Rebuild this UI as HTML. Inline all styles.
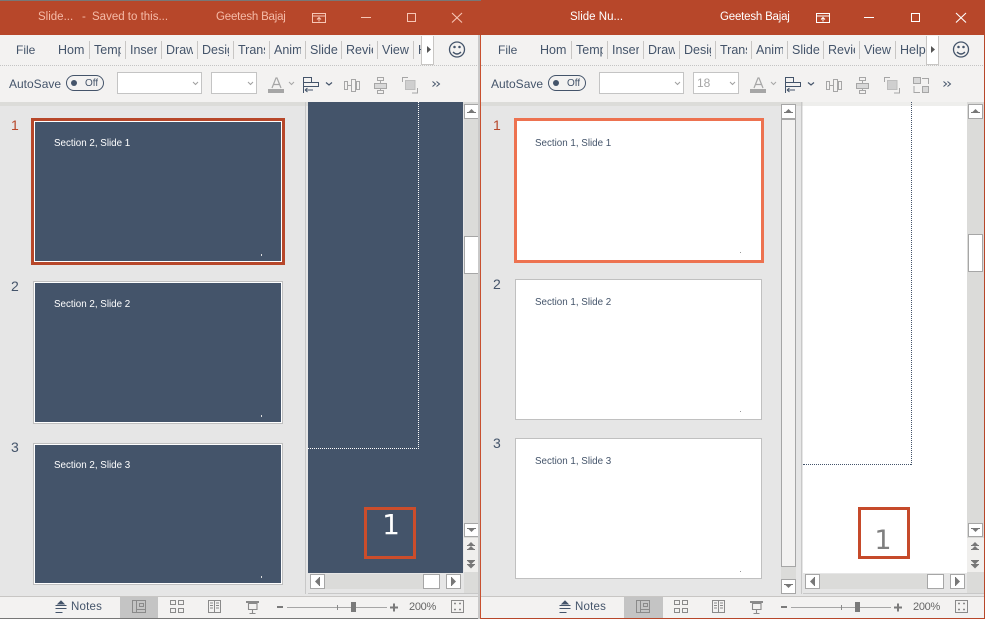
<!DOCTYPE html>
<html><head><meta charset="utf-8"><style>
html,body{margin:0;padding:0;background:#e6e6e6}
#p{position:relative;width:985px;height:619px;overflow:hidden;font-family:"Liberation Sans",sans-serif;color:#44546a;font-size:12px}
#p div{position:absolute;box-sizing:border-box}
.t{white-space:nowrap;overflow:hidden}
.sb{background:#fff;border:1px solid #a6a6a6}
.th{background:#44546a;border:1px solid #fff;outline:1px solid #c0c0c0}
.w{background:#fff;border:1px solid #c0c0c0}
.lab{font-size:9.800px;white-space:nowrap}
.tab{top:43px;font-size:12.500px}
.sep{top:41px;width:1px;height:18px;background:#c8c6c4}
.big{width:52px;text-align:center;font-size:28px;line-height:36px;font-family:"DejaVu Sans",sans-serif}
svg{position:absolute;left:0;top:0;overflow:visible}
</style></head><body><div id="p">
<svg width="0" height="0"><defs>
<g id="arrowU"><path d="M4 8.500L7.500 5L11 8.500Z" fill="#777"/><rect x="3" y="8" width="9" height="1" fill="#777"/></g>
<g id="arrowD"><path d="M4 5.500L7.500 9L11 5.500Z" fill="#777"/><rect x="3" y="5" width="9" height="1" fill="#777"/></g>
<g id="arrowL"><path d="M9 3.500L5 7.500L9 11.500Z" fill="#777"/><rect x="9" y="3" width="1" height="9" fill="#777"/></g>
<g id="arrowR"><path d="M6 3.500L10 7.500L6 11.500Z" fill="#777"/><rect x="5" y="3" width="1" height="9" fill="#777"/></g>
<g id="dbl" fill="#777"><path d="M471 542L467.500 545.500H474.500Z"/><rect x="467" y="545" width="8" height="1"/><path d="M471 546L467.500 549.500H474.500Z"/><rect x="467" y="549" width="8" height="1"/>
<rect x="467" y="560" width="8" height="1"/><path d="M467.500 561L471 564.500L474.500 561Z"/><rect x="467" y="564" width="8" height="1"/><path d="M467.500 565L471 568.500L474.500 565Z"/></g>
<g id="tools" fill="none">
<path d="M272 88L276 78H277L281 88M273.500 84.500H279.500" stroke="#a6a6a6" stroke-width="1.200"/><rect x="268" y="89" width="16" height="4" fill="#a6a6a6"/>
<path d="M289 82L291.500 84.500L294 82" stroke="#a6a6a6"/>
<path d="M303.500 77V93" stroke="#44546a"/><path d="M304 77.500H311.500V82.500H304M304 82.500H318.500V86.500H304" stroke="#44546a"/><path d="M305 90H313M305 90L307.500 88M305 90L307.500 92" stroke="#44546a"/>
<path d="M326 82.500L329 85L332 82.500" stroke="#44546a" stroke-width="1.200"/>
<g stroke="#a6a6a6"><rect x="344.500" y="81.500" width="3" height="8"/><rect x="351.500" y="79.500" width="4" height="12"/><rect x="356.500" y="81.500" width="3" height="8"/><path d="M347.500 85.500H351.500M355.500 85.500H356.500"/>
<rect x="377.500" y="77.500" width="6" height="3"/><rect x="374.500" y="83.500" width="12" height="5" fill="#d8d8d8"/><rect x="377.500" y="90.500" width="6" height="3"/><path d="M380.500 80.500V83.500M380.500 88.500V90.500"/>
<path d="M402.500 82V77.500H408M417.500 88V93H412"/></g><rect x="405.500" y="80.500" width="9.500" height="9" fill="#cfcfcf" stroke="#bdbdbd"/>
</g>
<path id="chev" d="M432.500 81.500L435.500 84L432.500 86.500M436.500 81.500L439.500 84L436.500 86.500" stroke="#44546a" fill="none"/>
<g id="smile" fill="none" stroke="#44546a" stroke-width="1.300"><circle cx="457" cy="49.500" r="7.500"/><path d="M453 52Q457 56 461 52"/><circle cx="454.500" cy="47" r=".6"/><circle cx="459.500" cy="47" r=".6"/></g>
<g id="status" fill="none" stroke="#8a8a8a">
<rect x="132.500" y="600.500" width="13" height="12"/><path d="M136.500 601V612M136.500 609.500H145"/><rect x="139.500" y="603.500" width="4" height="3"/>
<rect x="170.500" y="600.500" width="5" height="4"/><rect x="178.500" y="600.500" width="5" height="4"/><rect x="170.500" y="608.500" width="5" height="4"/><rect x="178.500" y="608.500" width="5" height="4"/>
<path d="M208.500 600.500H214.500V612.500H208.500ZM214.500 600.500H220.500V612.500H214.500ZM210 603H213M210 605.500H213M210 608H213M216 603H219M216 605.500H219M216 608H219"/>
<path d="M248.500 603.500H257V609.500H248.500ZM252.500 609.500V613.500M249.500 613.500H255.500" stroke-width="1.100"/><rect x="246" y="601" width="13" height="2" fill="#8a8a8a" stroke="none"/>
<path d="M287 607.500H387" stroke="#a6a6a6"/><path d="M337.500 605V610"/>
<rect x="451.500" y="600.500" width="12" height="12"/><path d="M454 603.500H456M455 602.500V604.500M459 603.500H461M460 602.500V604.500M454 609.500H456M455 608.500V610.500M459 609.500H461M460 608.500V610.500" stroke-width="1"/>
</g>
<g id="statusB"><rect x="351" y="602" width="5" height="10" fill="#7a7a7a"/><rect x="277" y="606" width="6" height="2" fill="#7a7a7a"/><path d="M390 607.500H398M394 603.500V611.500" stroke="#7a7a7a" stroke-width="2"/></g>
<g id="notes" fill="none" stroke="#44546a"><path d="M55.500 605.500H66.500M55.500 608.500H66.500M55.500 612.500H62.500"/><path d="M58 604L61 601L64 604Z" fill="#44546a"/></g>
</defs></svg>

<!-- LEFT WINDOW -->
<div style="left:0;top:0;width:481px;height:619px;background:#e6e6e6;overflow:hidden">
<div style="left:0;top:0;width:481px;height:1px;background:#777"></div>
<div style="left:0;top:1px;width:481px;height:34px;background:#b7472a"></div>
<div class="t" style="left:38px;top:11px;color:#f5bba8;font-size:11.500px">Slide...</div>
<div class="t" style="left:82px;top:11px;color:#f5bba8;font-size:11.500px">-</div>
<div class="t" style="left:92px;top:11px;color:#f5bba8;font-size:11.500px">Saved to this...</div>
<div class="t" style="left:216px;top:11px;width:70px;color:#f5bba8;font-size:11.500px;letter-spacing:-.2px">Geetesh Bajaj</div>
<div style="left:0;top:35px;width:481px;height:31px;background:#f3f2f1;border-bottom:1px dotted #c4c4c4"></div>
<div style="left:0;top:66px;width:481px;height:36px;background:#f3f2f1"></div>
<div style="left:0;top:102px;width:481px;height:4px;background:#dcdcd9"></div>
<div class="t tab" style="left:16px;font-size:12px">File</div>
<div class="t tab" style="left:58px;width:28px">Hom</div><div class="sep" style="left:89px"></div>
<div class="t tab" style="left:94px;width:27px">Templates</div><div class="sep" style="left:125px"></div>
<div class="t tab" style="left:130px;width:27px">Insert</div><div class="sep" style="left:161px"></div>
<div class="t tab" style="left:166px;width:27px">Draw</div><div class="sep" style="left:197px"></div>
<div class="t tab" style="left:202px;width:27px">Design</div><div class="sep" style="left:233px"></div>
<div class="t tab" style="left:238px;width:27px">Transitions</div><div class="sep" style="left:269px"></div>
<div class="t tab" style="left:274px;width:27px">Animations</div><div class="sep" style="left:305px"></div>
<div class="t tab" style="left:310px;width:28px">Slide</div><div class="sep" style="left:341px"></div>
<div class="t tab" style="left:346px;width:27px">Review</div><div class="sep" style="left:377px"></div>
<div class="t tab" style="left:382px;width:28px">View</div><div class="sep" style="left:413px"></div>
<div class="t tab" style="left:418px;width:4px">Help</div>
<div style="left:421px;top:36px;width:13px;height:29px;background:#fff;border:1px solid #c8c6c4;border-top:0"></div>
<div style="left:9px;top:77px;font-size:12px" class="t">AutoSave</div>
<div style="left:66px;top:75px;width:38px;height:16px;border:1px solid #44546a;border-radius:8px"></div>
<div style="left:71px;top:80px;width:6px;height:6px;background:#44546a;border-radius:50%"></div>
<div class="t" style="left:85px;top:78px;font-size:10px;">Off</div>
<div style="left:117px;top:72px;width:85px;height:22px;background:#fff;border:1px solid #c4c4c4"></div>
<div style="left:211px;top:72px;width:46px;height:22px;background:#fff;border:1px solid #c4c4c4"></div>
<svg width="481" height="619">
<path d="M193 82L195.500 84.500L198 82M248 82L250.500 84.500L253 82" fill="none" stroke="#a0a0a0"/>
<path d="M427 46L431 49.500L427 53Z" fill="#555"/>
<use href="#tools"/><use href="#chev"/><use href="#smile"/>
<path d="M312.500 13.500H325.500V22.500H312.500ZM312.500 16H325.500M319 21.500V17.500M317 19.500L319 17.500L321 19.500" fill="none" stroke="#f7c6b5"/>
<path d="M361 17.500H371" stroke="#f7c6b5"/><rect x="407.500" y="13.500" width="8" height="8" fill="none" stroke="#f7c6b5"/>
<path d="M452 13L462 22.500M462 13L452 22.500" stroke="#f7c6b5" stroke-width="1.100"/>
</svg>

<div style="left:305px;top:102px;width:1px;height:492px;background:#c8c8c8"></div>
<div style="left:308px;top:102px;width:155px;height:471px;background:#44546a"></div>
<div style="left:418px;top:102px;width:1px;height:347px;border-left:1px dotted #fff"></div>
<div style="left:308px;top:448px;width:111px;height:1px;border-top:1px dotted #fff"></div>
<div style="left:364px;top:507px;width:52px;height:52px;border:3px solid #cc4d2b"></div>
<div class="big" style="left:365px;top:507px;color:#fff">1</div>

<div style="left:31px;top:118px;width:254px;height:147px;background:#b7472a"></div>
<div style="left:34px;top:121px;width:248px;height:141px;background:#44546a;border:1px solid #fff"></div>
<div class="lab" style="left:54px;top:138px;color:#fff">Section 2, Slide 1</div>
<div style="left:261px;top:254px;width:1px;height:2px;background:#ddd"></div>
<div class="th" style="left:34px;top:282px;width:248px;height:141px"></div>
<div class="lab" style="left:54px;top:299px;color:#fff">Section 2, Slide 2</div>
<div style="left:261px;top:415px;width:1px;height:2px;background:#ddd"></div>
<div class="th" style="left:34px;top:444px;width:248px;height:140px"></div>
<div class="lab" style="left:54px;top:460px;color:#fff">Section 2, Slide 3</div>
<div style="left:261px;top:576px;width:1px;height:2px;background:#ddd"></div>
<div style="left:11px;top:117px;font-size:14px;color:#b7472a">1</div>
<div style="left:11px;top:278px;font-size:14px">2</div>
<div style="left:11px;top:439px;font-size:14px">3</div>

<div style="left:464px;top:102px;width:15px;height:491px;background:#dbdbd9"></div>
<div class="sb" style="left:464px;top:104px;width:15px;height:15px"></div>
<div class="sb" style="left:464px;top:236px;width:15px;height:38px"></div>
<div class="sb" style="left:464px;top:523px;width:15px;height:14px"></div>
<div style="left:464px;top:538px;width:15px;height:34px;background:#f0efed"></div>
<div style="left:325px;top:574px;width:98px;height:15px;background:#dbdbd9"></div>
<div class="sb" style="left:310px;top:574px;width:15px;height:15px"></div>
<div class="sb" style="left:423px;top:574px;width:17px;height:15px"></div>
<div class="sb" style="left:446px;top:574px;width:15px;height:15px"></div>
<svg width="481" height="619"><use href="#arrowU" x="464" y="104"/><use href="#arrowD" x="464" y="523"/><use href="#dbl"/><use href="#arrowL" x="310" y="574"/><use href="#arrowR" x="446" y="574"/></svg>
<div style="left:308px;top:593px;width:172px;height:1px;background:#c8c8c8"></div>

<div style="left:0;top:596px;width:481px;height:23px;background:#f3f2f1;border-top:1px solid #c8c6c4;border-bottom:1px solid #777"></div>
<div style="left:120px;top:597px;width:38px;height:21px;background:#c4c4c4"></div>
<div class="t" style="left:71px;top:601px;font-size:11.500px;letter-spacing:.2px">Notes</div>
<div class="t" style="left:409px;top:601px;font-size:11px;letter-spacing:-.3px;color:#666">200%</div>
<svg width="481" height="619"><use href="#notes"/><use href="#status"/><use href="#statusB"/></svg>
<div style="left:478px;top:35px;width:2px;height:584px;background:#c9c9c9"></div>
<div style="left:480px;top:35px;width:1px;height:584px;background:#c8502f"></div>
</div>

<!-- RIGHT WINDOW -->
<div style="left:481px;top:0;width:504px;height:619px;background:#e6e6e6;overflow:hidden">
<div style="left:0;top:0;width:504px;height:35px;background:#b7472a"></div>
<div class="t" style="left:89px;top:11px;color:#fff;font-size:11.500px">Slide Nu...</div>
<div class="t" style="left:239px;top:11px;width:70px;color:#fff;font-size:11.500px;letter-spacing:-.2px">Geetesh Bajaj</div>
<div style="left:0;top:35px;width:504px;height:31px;background:#f3f2f1;border-bottom:1px dotted #c4c4c4"></div>
<div style="left:0;top:66px;width:504px;height:36px;background:#f3f2f1"></div>
<div style="left:0;top:102px;width:504px;height:4px;background:#dcdcd9"></div>
<div class="t tab" style="left:17px;font-size:12px">File</div>
<div class="t tab" style="left:59px;width:28px">Hom</div><div class="sep" style="left:90px"></div>
<div class="t tab" style="left:95px;width:27px">Templates</div><div class="sep" style="left:126px"></div>
<div class="t tab" style="left:131px;width:27px">Insert</div><div class="sep" style="left:162px"></div>
<div class="t tab" style="left:167px;width:27px">Draw</div><div class="sep" style="left:198px"></div>
<div class="t tab" style="left:203px;width:27px">Design</div><div class="sep" style="left:234px"></div>
<div class="t tab" style="left:239px;width:27px">Transitions</div><div class="sep" style="left:270px"></div>
<div class="t tab" style="left:275px;width:27px">Animations</div><div class="sep" style="left:306px"></div>
<div class="t tab" style="left:311px;width:28px">Slide</div><div class="sep" style="left:342px"></div>
<div class="t tab" style="left:347px;width:27px">Review</div><div class="sep" style="left:378px"></div>
<div class="t tab" style="left:383px;width:28px">View</div><div class="sep" style="left:414px"></div>
<div class="t tab" style="left:419px;width:26px">Help</div>
<div style="left:445px;top:36px;width:13px;height:29px;background:#fff;border:1px solid #c8c6c4;border-top:0"></div>
<div style="left:10px;top:77px" class="t">AutoSave</div>
<div style="left:67px;top:75px;width:38px;height:16px;border:1px solid #44546a;border-radius:8px"></div>
<div style="left:72px;top:80px;width:6px;height:6px;background:#44546a;border-radius:50%"></div>
<div class="t" style="left:86px;top:78px;font-size:10px;">Off</div>
<div style="left:118px;top:72px;width:85px;height:22px;background:#fff;border:1px solid #c4c4c4"></div>
<div style="left:212px;top:72px;width:46px;height:22px;background:#fff;border:1px solid #c4c4c4"></div>
<div class="t" style="left:216px;top:76px;font-size:12px;color:#a6a6a6">18</div>
<svg width="504" height="619">
<path d="M194 82L196.500 84.500L199 82M249 82L251.500 84.500L254 82" fill="none" stroke="#a0a0a0"/>
<path d="M450 46L454 49.500L450 53Z" fill="#555"/>
<g transform="translate(1 0)"><use href="#tools"/></g>
<g transform="translate(30 0)"><use href="#chev"/></g>
<g fill="none" stroke="#a6a6a6"><rect x="432.500" y="77.500" width="7" height="6" fill="#d8d8d8"/><rect x="441.500" y="86.500" width="6" height="6" fill="#d8d8d8"/><path d="M441 78.500H447.500V84M433 86V92.500H439"/></g>
<g transform="translate(23 0)"><use href="#smile"/></g>
<path d="M335.500 13.500H348.500V22.500H335.500ZM335.500 16H348.500M342 21.500V17.500M340 19.500L342 17.500L344 19.500" fill="none" stroke="#fff"/>
<path d="M383 17.500H393" stroke="#fff"/><rect x="430.500" y="13.500" width="8" height="8" fill="none" stroke="#fff"/>
<path d="M475 13L485 22.500M485 13L475 22.500" stroke="#fff" stroke-width="1.100"/>
</svg>

<div style="left:320px;top:102px;width:1px;height:492px;background:#c8c8c8"></div>
<div style="left:322px;top:102px;width:164px;height:471px;background:#fff"></div>
<div style="left:322px;top:102px;width:164px;height:4px;background:#eeeeec"></div>
<div style="left:430px;top:102px;width:1px;height:363px;border-left:1px dotted #44546a"></div>
<div style="left:322px;top:464px;width:108px;height:1px;border-top:1px dotted #44546a"></div>
<div style="left:377px;top:507px;width:52px;height:52px;border:3px solid #c64a2a"></div>
<div class="big" style="left:376px;top:523px;color:#7f7f7f;font-size:27px">1</div>

<div style="left:33px;top:118px;width:250px;height:145px;background:#fff;border:3px solid #ed7250"></div>
<div class="lab" style="left:54px;top:138px">Section 1, Slide 1</div>
<div style="left:259px;top:252px;width:1px;height:1px;background:#999"></div>
<div class="w" style="left:34px;top:279px;width:247px;height:141px"></div>
<div class="lab" style="left:54px;top:297px">Section 1, Slide 2</div>
<div style="left:259px;top:411px;width:1px;height:1px;background:#999"></div>
<div class="w" style="left:34px;top:438px;width:247px;height:141px"></div>
<div class="lab" style="left:54px;top:456px">Section 1, Slide 3</div>
<div style="left:259px;top:571px;width:1px;height:1px;background:#999"></div>
<div style="left:12px;top:117px;font-size:14px;color:#b7472a">1</div>
<div style="left:12px;top:276px;font-size:14px">2</div>
<div style="left:12px;top:435px;font-size:14px">3</div>

<div style="left:300px;top:104px;width:15px;height:490px;background:#dbdbd9"></div>
<div class="sb" style="left:300px;top:104px;width:15px;height:15px"></div>
<div style="left:300px;top:119px;width:15px;height:448px;background:#f3f2f1;border:1px solid #a6a6a6"></div>
<div class="sb" style="left:300px;top:579px;width:15px;height:15px"></div>
<div style="left:486px;top:102px;width:17px;height:491px;background:#dbdbd9"></div>
<div class="sb" style="left:487px;top:104px;width:15px;height:15px"></div>
<div class="sb" style="left:487px;top:234px;width:15px;height:38px"></div>
<div class="sb" style="left:487px;top:523px;width:15px;height:14px"></div>
<div style="left:486px;top:538px;width:17px;height:34px;background:#f0efed"></div>
<div style="left:339px;top:574px;width:107px;height:15px;background:#dbdbd9"></div>
<div class="sb" style="left:324px;top:574px;width:15px;height:15px"></div>
<div class="sb" style="left:446px;top:574px;width:17px;height:15px"></div>
<div class="sb" style="left:469px;top:574px;width:15px;height:15px"></div>
<svg width="504" height="619"><use href="#arrowU" x="300" y="104"/><use href="#arrowD" x="300" y="579"/><use href="#arrowU" x="487" y="104"/><use href="#arrowD" x="487" y="523"/><g transform="translate(23 0)"><use href="#dbl"/></g><use href="#arrowL" x="324" y="574"/><use href="#arrowR" x="469" y="574"/></svg>
<div style="left:322px;top:593px;width:182px;height:1px;background:#c8c8c8"></div>

<div style="left:0;top:596px;width:504px;height:23px;background:#f3f2f1;border-top:1px solid #c8c6c4;"></div>
<div style="left:143px;top:597px;width:39px;height:21px;background:#c4c4c4"></div>
<div class="t" style="left:94px;top:601px;font-size:11.500px;letter-spacing:.2px">Notes</div>
<div class="t" style="left:432px;top:601px;font-size:11px;letter-spacing:-.3px;color:#666">200%</div>
<svg width="504" height="619"><g transform="translate(23 0)"><use href="#notes"/><use href="#status"/><use href="#statusB"/></g></svg>
<div style="left:503px;top:0;width:1px;height:619px;background:#b7472a"></div>
<div style="left:0;top:618px;width:504px;height:1px;background:#b7472a"></div>
</div>
</div></body></html>
